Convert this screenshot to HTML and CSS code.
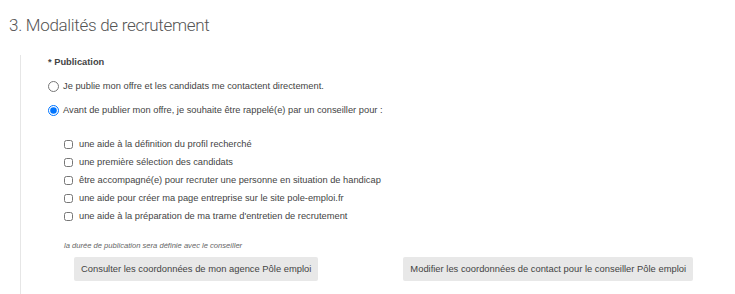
FILE: index.html
```html
<!DOCTYPE html>
<html lang="fr">
<head>
    <meta charset="UTF-8">
    <title>Modalités de recrutement</title>
    <link rel="stylesheet" href="styles.css">
</head>
<body>
    <h2 class="etape-titre">3. Modalités de recrutement</h2>

    <section class="etape-bloc">
        <p class="champ-label">* Publication</p>

        <label class="choix">
            <input type="radio" name="publication">
            Je publie mon offre et les candidats me contactent directement.
        </label>
        <label class="choix">
            <input type="radio" name="publication" checked>
            Avant de publier mon offre, je souhaite être rappelé(e) par un conseiller pour :
        </label>

        <div class="options">
            <label class="option"><input type="checkbox"> une aide à la définition du profil recherché</label>
            <label class="option"><input type="checkbox"> une première sélection des candidats</label>
            <label class="option"><input type="checkbox"> être accompagné(e) pour recruter une personne en situation de handicap</label>
            <label class="option"><input type="checkbox"> une aide pour créer ma page entreprise sur le site pole-emploi.fr</label>
            <label class="option"><input type="checkbox"> une aide à la préparation de ma trame d'entretien de recrutement</label>
        </div>

        <p class="note">la durée de publication sera définie avec le conseiller</p>

        <div class="actions">
            <button class="btn">Consulter les coordonnées de mon agence Pôle emploi</button>
            <button class="btn">Modifier les coordonnées de contact pour le conseiller Pôle emploi</button>
        </div>
    </section>
</body>
</html>
```

FILE: styles.css
```css
body {
    margin: 0;
    font-family: "Liberation Sans", Arial, sans-serif;
    color: #444;
    background-color: #fff;
}

.etape-titre {
    margin: 0;
    padding: 14px 0 0 9px;
    font-family: Roboto, sans-serif;
    font-weight: 300;
    font-size: 17px;
    letter-spacing: -0.3px;
    line-height: 22px;
    color: #555;
}

.etape-bloc {
    margin: 19px 0 0 20px;
    padding: 0 0 20px 27px;
    border-left: 1px solid #e6e6e6;
}

.champ-label {
    margin: 0;
    font-weight: bold;
    font-size: 9.3px;
    line-height: 14px;
    color: #444;
}

.choix {
    display: flex;
    align-items: center;
    margin-top: 10px;
    font-size: 9.3px;
    line-height: 14px;
}

.choix input {
    margin: 0 4px 0 0;
    width: 11px;
    height: 11px;
}

.options {
    display: flex;
    flex-direction: column;
    gap: 4px;
    margin: 20px 0 0 16px;
}

.option {
    display: flex;
    align-items: center;
    font-size: 9.3px;
    line-height: 14px;
}

.option input {
    margin: 0 6px 0 0;
    width: 9px;
    height: 9px;
}

.note {
    margin: 18px 0 0 16px;
    font-style: italic;
    font-size: 7.6px;
    color: #666;
}

.actions {
    display: flex;
    gap: 85px;
    margin: 7px 0 0 26px;
}

.btn {
    padding: 6px 7px;
    font-family: "Liberation Sans", Arial, sans-serif;
    font-size: 9.4px;
    line-height: 12px;
    white-space: nowrap;
    color: #444;
    background-color: #e8e8e8;
    border: none;
    border-radius: 2px;
}
```
